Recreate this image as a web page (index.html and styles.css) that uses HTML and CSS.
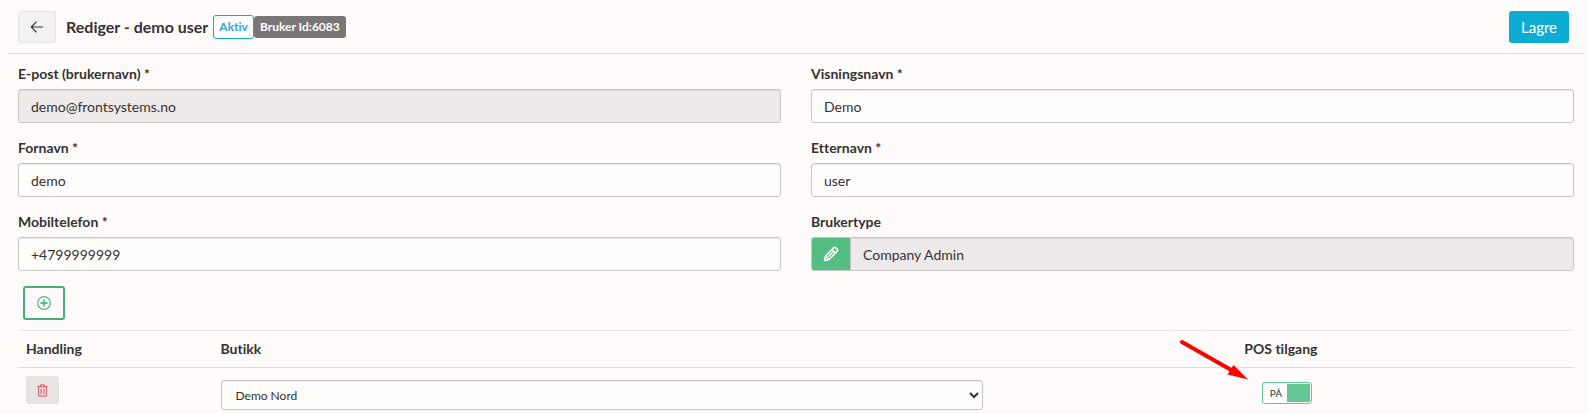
FILE: index.html
```html
<!DOCTYPE html>
<html lang="no">
<head>
<meta charset="utf-8">
<meta name="viewport" content="width=device-width, initial-scale=1">
<title>Rediger - demo user</title>
<link rel="stylesheet" href="styles.css">
</head>
<body>
<header class="topbar">
  <button class="btn btn-back" type="button" aria-label="Tilbake">
    <svg width="14" height="14" viewBox="0 0 14 14" fill="none" stroke="currentColor" stroke-width="1.2"><path d="M13 7H1.5M6.5 1.7 1.3 7l5.2 5.3"/></svg>
  </button>
  <h1 class="title">Rediger - demo user</h1>
  <div class="badges">
    <span class="badge badge-active">Aktiv</span>
    <span class="badge badge-id">Bruker Id:6083</span>
  </div>
  <button class="btn btn-save" type="button">Lagre</button>
</header>
<main class="content">
  <form class="fields">
    <div class="field">
      <label for="email">E-post (brukernavn) *</label>
      <input class="control" id="email" type="text" value="demo@frontsystems.no" readonly>
    </div>
    <div class="field">
      <label for="display">Visningsnavn *</label>
      <input class="control" id="display" type="text" value="Demo">
    </div>
    <div class="field">
      <label for="first">Fornavn *</label>
      <input class="control" id="first" type="text" value="demo">
    </div>
    <div class="field">
      <label for="last">Etternavn *</label>
      <input class="control" id="last" type="text" value="user">
    </div>
    <div class="field">
      <label for="phone">Mobiltelefon *</label>
      <input class="control" id="phone" type="text" value="+4799999999">
    </div>
    <div class="field">
      <label for="type">Brukertype</label>
      <div class="group">
        <button class="btn-edit" type="button" aria-label="Rediger brukertype">
          <svg width="16" height="16" viewBox="0 0 16 16" fill="none" stroke="currentColor" stroke-width="1.5" stroke-linejoin="round"><path d="M1.5 14.5 2.5 10 10.6 1.9Q11.8.8 13 1.9L14.1 3Q15.2 4.200 14.100 5.400L6 13.500ZM2.500 10 6 13.500M9 3.500 12.500 7M5.200 10.800 10 6"/></svg>
        </button>
        <input class="control" id="type" type="text" value="Company Admin" readonly>
      </div>
    </div>
  </form>
  <button class="btn-add" type="button" aria-label="Legg til">
    <svg width="14" height="14" viewBox="0 0 14 14" fill="none" stroke="currentColor" stroke-width="1.3"><circle cx="7" cy="7" r="6.300"/><path stroke-width="1.800" d="M7 3.500v7M3.500 7h7"/></svg>
  </button>
  <table class="stores">
    <thead>
      <tr><th class="col-action">Handling</th><th class="col-store">Butikk</th><th class="col-space"></th><th>POS tilgang</th></tr>
    </thead>
    <tbody>
      <tr>
        <td>
          <button class="btn-delete" type="button" aria-label="Slett">
            <svg width="11" height="13" viewBox="0 0 12 14" fill="none" stroke="currentColor" stroke-width="1.300"><path d="M.5 2.800h11M3.800 2.600V1.800Q3.800.7 4.800.7h2.400q1 0 1 1.100v.8M1.700 3v8.900q0 1.200 1.200 1.200h6.200q1.200 0 1.200-1.200V3M4.500 5v6M7.500 5v6"/></svg>
          </button>
        </td>
        <td>
          <select class="select" aria-label="Butikk"><option>Demo Nord</option></select>
        </td>
        <td></td>
        <td class="cell-access">
          <label class="toggle"><input type="checkbox" checked aria-label="POS tilgang"><span class="toggle-text">PÅ</span><span class="toggle-knob"></span></label>
          <svg class="pointer" width="70" height="42" viewBox="0 0 70 42"><path d="M3 4 54 33" stroke="#f00" stroke-width="4" stroke-linecap="round"/><path d="M54.500 27 69 41.500 48.500 36.500Z" fill="#f00"/></svg>
        </td>
      </tr>
    </tbody>
  </table>
</main>
</body>
</html>
```
FILE: styles.css
```css
* { box-sizing: border-box; }
body {
  margin: 0;
  background: #fffbfb;
  color: #333;
  font: 14px/20px Lato, "Open Sans", sans-serif;
  font-variant-ligatures: none;
}
button, input, select { font: inherit; color: inherit; margin: 0; }
svg { display: block; }
.topbar {
  display: flex;
  align-items: center;
  margin: 0 4px 0 8px;
  padding: 11px 15px 10px 10px;
  border-bottom: 1px solid #e1dede;
}
.btn { height: 32px; border-radius: 3px; cursor: pointer; }
.btn-back {
  display: flex;
  align-items: center;
  justify-content: center;
  width: 38px;
  padding: 0;
  border: 1px solid #e6e3e3;
  background: #f4f1f1;
}
.title { margin: 0 5px 0 10px; font-size: 16px; line-height: 20px; font-weight: 700; }
.badges { display: flex; align-items: center; }
.badge { border-radius: 3px; font-size: 12px; line-height: 22px; font-weight: 700; }
.badge-active { padding: 0 5px; border: 1px solid #0dadd3; background: #fff; color: #2fa8d0; }
.badge-id { padding: 0 6px; background: #797676; color: #fff; }
.btn-save {
  margin-left: auto;
  padding: 0 12px;
  border: 0;
  background: #0dadd3;
  color: #fff;
  font-size: 15px;
}
.content { padding: 10px 14px 0 18px; }
.fields {
  display: grid;
  grid-template-columns: 1fr 1fr;
  gap: 15px 30px;
}
.field label { display: block; margin-bottom: 5px; font-weight: 700; }
.control {
  display: block;
  width: 100%;
  height: 34px;
  padding: 0 12px;
  border: 1px solid #c8c5c5;
  border-radius: 3px;
  background: #fffcfc;
  box-shadow: inset 0 1px 1px rgba(0, 0, 0, .08);
}
.control:read-only { background: #eeeaea; }
.group { display: flex; }
.group .control { border-radius: 0 3px 3px 0; }
.btn-edit {
  display: flex;
  flex: none;
  align-items: center;
  justify-content: center;
  width: 39px;
  padding: 0;
  border: 1px solid #c8c5c5;
  border-right: 0;
  border-radius: 3px 0 0 3px;
  background: #53bd84;
  color: #fff;
}
.btn-add {
  display: flex;
  align-items: center;
  justify-content: center;
  width: 42px;
  height: 34px;
  margin: 15px 0 10px 5px;
  padding: 0;
  border: 2px solid #45b178;
  border-radius: 3px;
  background: none;
  color: #53bd84;
}
.stores { width: 100%; table-layout: fixed; border-collapse: collapse; border-top: 1px solid #ebe8e8; }
.stores th { height: 37px; padding: 0 8px; border-bottom: 1px solid #dedbdb; text-align: left; font-weight: 700; }
.stores td { padding: 8px; vertical-align: top; }
.col-action { width: 12.5%; }
.col-store { width: 50%; }
.col-space { width: 15.8%; }
.btn-delete {
  display: flex;
  align-items: center;
  justify-content: center;
  width: 33px;
  height: 28px;
  padding: 0;
  border: 0;
  border-radius: 3px;
  background: #e7e4e4;
  color: #db6374;
}
.select {
  display: block;
  width: 100%;
  height: 30px;
  margin-top: 4px;
  padding: 0 10px;
  border: 1px solid #c8c5c5;
  border-radius: 3px;
  background: #fffcfc;
  box-shadow: inset 0 1px 1px rgba(0, 0, 0, .08);
  font-size: 12px;
}
.cell-access { position: relative; }
.toggle {
  display: flex;
  width: 50px;
  height: 22px;
  margin: 6px 0 0 18px;
  padding: 1px;
  border: 1px solid #67c794;
  border-radius: 3px;
  background: #fff;
  cursor: pointer;
}
.toggle input { position: absolute; opacity: 0; }
.toggle-text { flex: 1; text-align: center; font-size: 10px; line-height: 18px; }
.toggle-knob { width: 23px; background: #67c794; }
.pointer { position: absolute; top: -30px; left: -57px; }
```
